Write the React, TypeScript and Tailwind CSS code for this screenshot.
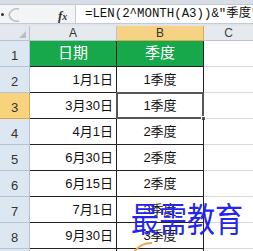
import React from 'react';

const rows = [
  { a: '日期', b: '季度', head: true },
  { a: '1月1日', b: '1季度' },
  { a: '3月30日', b: '1季度' },
  { a: '4月1日', b: '2季度' },
  { a: '6月30日', b: '2季度' },
  { a: '6月15日', b: '2季度' },
  { a: '7月1日', b: '3季度' },
  { a: '9月30日', b: '3季度' },
  { a: '', b: '', empty: true },
];

const font = { fontFamily: '"Liberation Sans", "Noto Sans CJK SC", sans-serif' };

export default function App() {
  return (
    <div className="relative w-[253px] h-[251px] overflow-hidden bg-white" style={font}>
      {/* formula bar */}
      <div className="h-[26px] bg-[#dfe4ea] flex flex-col">
        <div className="h-[4px] bg-[#d9dee6]" />
        <div className="h-[20px] flex border-y border-[#c5cbd3]">
          <div className="w-[75px] bg-[#f3f4f6] flex items-center relative">
            <span className="absolute left-[1px] top-[8px] w-[3px] h-[3px] rounded-full bg-[#333]" />
            <svg className="absolute left-[6px] top-[1px]" width="16" height="18" viewBox="0 0 16 18">
              <path d="M13 3 A8 8 0 0 0 3 9 A8 8 0 0 0 13 15" fill="none" stroke="#b9c0c9" strokeWidth="1.5" />
            </svg>
            <span className="absolute left-[58px] top-[1px] text-[13px] italic font-bold text-[#333]" style={{ fontFamily: '"Liberation Serif", serif' }}>
              f<span className="text-[10px]">x</span>
            </span>
          </div>
          <div className="flex-1 bg-white border-l border-[#c5cbd3] flex items-center pl-[9px] whitespace-nowrap overflow-hidden">
            <span className="text-[12.4px] text-[#111]" style={{ fontFamily: '"Liberation Mono", "Noto Sans CJK SC", monospace' }}>
              =LEN(2^MONTH(A3))&amp;"季度"
            </span>
          </div>
        </div>
      </div>

      {/* sheet */}
      <div className="grid grid-cols-[30px_87px_87px_1fr] grid-rows-[15px_repeat(9,26px)]">
        <div className="bg-[#e4e8ee] border-r border-b border-[#b7c3d1] relative">
          <svg className="absolute right-[3px] bottom-[2px]" width="7" height="7" viewBox="0 0 7 7">
            <path d="M7 0 L7 7 L0 7 Z" fill="#b8bec6" />
          </svg>
        </div>
        <div className="bg-[#e6eaef] border-r border-b border-[#b7c3d1] flex items-center justify-center text-[12px] text-[#333]">A</div>
        <div className="bg-[#f6d384] border-r border-b border-[#d9a94a] flex items-center justify-center text-[12px] text-[#333]">B</div>
        <div className="bg-[#e6eaef] border-b border-[#b7c3d1] flex items-center justify-center text-[12px] text-[#444]">C</div>

        {rows.map((r, i) => (
          <React.Fragment key={i}>
            <div
              className={
                i === 2
                  ? 'bg-[#f8d27c] border-r border-b border-[#d9a94a] flex items-end justify-center pb-[1px] text-[13px] text-[#333]'
                  : 'bg-[#dde7f2] border-r border-b border-[#b3c2d4] flex items-end justify-center pb-[1px] text-[13px] text-[#333]'
              }
            >
              {r.empty ? '' : i + 1}
            </div>
            {r.head ? (
              <>
                <div className="bg-[#17a84b] border-r border-b border-[#222] flex items-center justify-center text-[15px] text-white">{r.a}</div>
                <div className="bg-[#17a84b] border-r border-b border-[#222] flex items-center justify-center text-[15px] text-white">{r.b}</div>
              </>
            ) : r.empty ? (
              <>
                <div className="border-r border-[#222]" />
                <div className="border-r border-[#222]" />
              </>
            ) : (
              <>
                <div className="border-r border-b border-[#222] flex items-center justify-end pr-[3px] text-[13px] text-[#111]">{r.a}</div>
                <div className="relative border-r border-b border-[#222] flex items-center justify-center text-[13px] text-[#111]">
                  {r.b}
                  {i === 2 && (
                    <>
                      <span className="absolute -left-[1px] -top-[1px] -right-[1px] -bottom-[1px] border-2 border-[#555]" />
                      <span className="absolute -right-[3px] -bottom-[3px] w-[5px] h-[5px] bg-[#555] border border-white" />
                    </>
                  )}
                </div>
              </>
            )}
            <div className="border-b border-[#dadada]" />
          </React.Fragment>
        ))}
      </div>

      {/* watermark */}
      <div
        className="absolute left-[131px] top-[201px] text-[28px] leading-none text-[#2424ee] origin-top scale-y-[1.2]"
        style={{ fontFamily: '"Noto Sans CJK SC", serif' }}
      >
        最需教育
      </div>
      <svg className="absolute left-[130px] top-[238px]" width="40" height="13" viewBox="0 0 40 13">
        <path d="M4 14 A22 22 0 0 1 22 5" fill="none" stroke="#f0a55a" strokeWidth="2" />
      </svg>
    </div>
  );
}
